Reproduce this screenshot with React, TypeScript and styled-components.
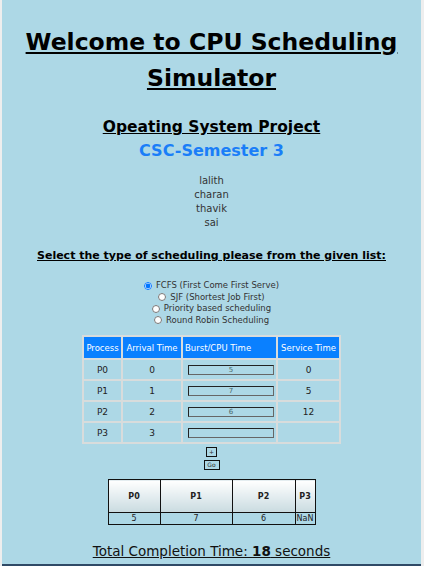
import React from "react";
import styled, { createGlobalStyle } from "styled-components";

const Global = createGlobalStyle`
  html { background: #eeeeee; }
  body { margin: 0; font-family: "Comic Sans MS", "DejaVu Sans", sans-serif; }
`;

const Page = styled.div`
  margin: 0 3px 0 2px;
  background: #add8e6;
  min-height: 564px;
  text-align: center;
  display: flex;
  flex-direction: column;
  align-items: center;
  color: #000;
`;

const Title = styled.h1`
  margin: 24px 0 0;
  font-size: 23.5px;
  line-height: 36px;
  font-weight: bold;
  text-decoration: underline;
  white-space: nowrap;
`;

const SubTitle = styled.h2`
  margin: 19px 0 0;
  font-size: 15.5px;
  line-height: 24px;
  text-decoration: underline;
`;

const Semester = styled.h3`
  margin: 0;
  font-size: 16px;
  line-height: 24px;
  color: #1a7ef8;
`;

const Names = styled.div`
  margin-top: 11px;
  font-size: 10px;
  line-height: 14px;
  color: #333;
`;

const Prompt = styled.h4`
  margin: 17px 0 0;
  font-size: 11px;
  line-height: 18px;
  text-decoration: underline;
`;

const RadioList = styled.div`
  margin-top: 15px;
  font-size: 8.5px;
  line-height: 11.5px;
  color: #333;
  display: flex;
  flex-direction: column;
  align-items: center;
`;

const RadioRow = styled.label`
  display: flex;
  align-items: center;
  gap: 4px;
`;

const Radio = styled.input`
  margin: 0;
  width: 8px;
  height: 8px;
`;

const Table = styled.table`
  margin-top: 9px;
  border-collapse: collapse;
  table-layout: fixed;
  width: 257px;
  font-size: 9px;
`;

const Th = styled.th<{ $align?: string; $w: number }>`
  box-sizing: border-box;
  background: #0a80ff;
  color: #fff;
  font-weight: normal;
  font-size: 8.5px;
  height: 23px;
  padding: 0 2px;
  width: ${(p) => p.$w}px;
  text-align: ${(p) => p.$align || "center"};
  border: 2px solid #d8dcdc;
  white-space: nowrap;
`;

const Td = styled.td`
  height: 19px;
  border: 2px solid #d8dcdc;
  color: #222;
  padding: 0 3px;
`;

const BurstInput = styled.input`
  box-sizing: border-box;
  width: 86px;
  height: 10px;
  margin: 0 0 0 2px;
  padding: 0;
  border: 1px solid #666;
  border-top-color: #222;
  border-left-color: #222;
  background: #add8e6;
  font-size: 7px;
  line-height: 8px;
  text-align: center;
  color: #4a6a6a;
  display: block;
  font-family: inherit;
`;

const Buttons = styled.div`
  margin-top: 3px;
  display: flex;
  flex-direction: column;
  align-items: center;
  gap: 3px;
`;

const SmallButton = styled.button<{ $w: number }>`
  box-sizing: border-box;
  width: ${(p) => p.$w}px;
  height: 10px;
  padding: 0;
  font-size: 6px;
  line-height: 8px;
  background: #add8e6;
  border: 1px solid #111;
  color: #333;
  font-family: inherit;
`;

const Gantt = styled.table`
  margin-top: 9px;
  border-collapse: collapse;
  table-layout: fixed;
  width: 207px;
  font-size: 8px;
`;

const GTh = styled.th<{ $w: number }>`
  box-sizing: border-box;
  width: ${(p) => p.$w}px;
  height: 33px;
  padding: 0;
  border: 1px solid #111;
  background: linear-gradient(#ffffff, #c9dbe0);
  color: #222;
`;

const GTd = styled.td`
  height: 11px;
  padding: 0;
  border: 1px solid #111;
  color: #222;
  white-space: nowrap;
  overflow: hidden;
`;

const Total = styled.div`
  margin-top: 16px;
  font-size: 13.5px;
  line-height: 20px;
  text-decoration: underline;
  color: #111;
`;

const Spacer = styled.div`
  flex: 1;
`;

const Footer = styled.div`
  height: 2px;
  background: #2f4a66;
  margin: 0 3px 0 2px;
`;

const rows = [
  { p: "P0", a: "0", b: "5", s: "0" },
  { p: "P1", a: "1", b: "7", s: "5" },
  { p: "P2", a: "2", b: "6", s: "12" },
  { p: "P3", a: "3", b: "", s: "" },
];

const gantt = [
  { p: "P0", v: "5", w: 52 },
  { p: "P1", v: "7", w: 72 },
  { p: "P2", v: "6", w: 63 },
  { p: "P3", v: "NaN", w: 20 },
];

export default function App() {
  return (
    <>
      <Global />
      <Page>
        <Title>
          Welcome to CPU Scheduling
          <br />
          Simulator
        </Title>
        <SubTitle>Opeating System Project</SubTitle>
        <Semester>CSC-Semester 3</Semester>
        <Names>
          lalith
          <br />
          charan
          <br />
          thavik
          <br />
          sai
        </Names>
        <Prompt>Select the type of scheduling please from the given list:</Prompt>
        <RadioList>
          <RadioRow>
            <Radio type="radio" name="alg" defaultChecked />
            FCFS (First Come First Serve)
          </RadioRow>
          <RadioRow>
            <Radio type="radio" name="alg" />
            SJF (Shortest Job First)
          </RadioRow>
          <RadioRow>
            <Radio type="radio" name="alg" />
            Priority based scheduling
          </RadioRow>
          <RadioRow>
            <Radio type="radio" name="alg" />
            Round Robin Scheduling
          </RadioRow>
        </RadioList>
        <Table>
          <thead>
            <tr>
              <Th $w={39}>Process</Th>
              <Th $w={60}>Arrival Time</Th>
              <Th $w={95} $align="left">
                Burst/CPU Time
              </Th>
              <Th $w={63}>Service Time</Th>
            </tr>
          </thead>
          <tbody>
            {rows.map((r) => (
              <tr key={r.p}>
                <Td>{r.p}</Td>
                <Td>{r.a}</Td>
                <Td>
                  <BurstInput defaultValue={r.b} />
                </Td>
                <Td>{r.s}</Td>
              </tr>
            ))}
          </tbody>
        </Table>
        <Buttons>
          <SmallButton $w={11}>+</SmallButton>
          <SmallButton $w={16}>Go</SmallButton>
        </Buttons>
        <Gantt>
          <thead>
            <tr>
              {gantt.map((g) => (
                <GTh key={g.p} $w={g.w}>
                  {g.p}
                </GTh>
              ))}
            </tr>
          </thead>
          <tbody>
            <tr>
              {gantt.map((g) => (
                <GTd key={g.p}>{g.v}</GTd>
              ))}
            </tr>
          </tbody>
        </Gantt>
        <Total>
          Total Completion Time: <b>18</b> seconds
        </Total>
        <Spacer />
      </Page>
      <Footer />
    </>
  );
}
